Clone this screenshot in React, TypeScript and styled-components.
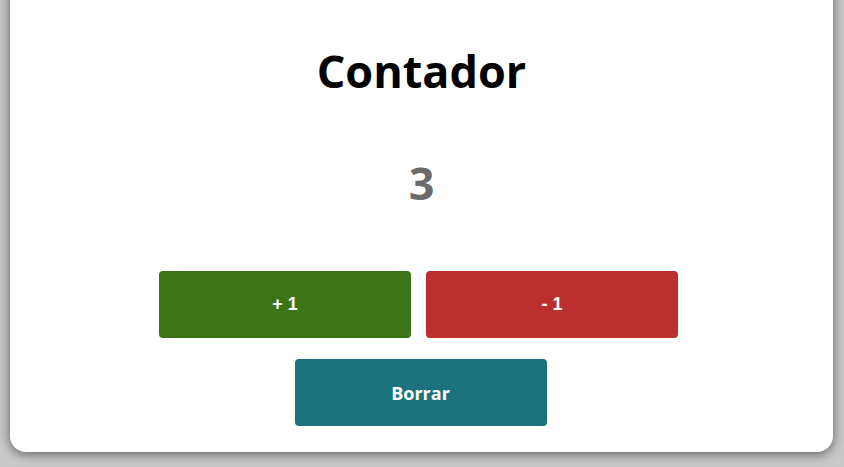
import React, { useState } from "react";
import styled, { createGlobalStyle } from "styled-components";

const Global = createGlobalStyle`
  html, body {
    margin: 0;
    padding: 0;
    background: #c9c9c9;
    overflow: hidden;
  }
  body {
    font-family: "Open Sans", "Noto Sans", sans-serif;
  }
`;

const Page = styled.div`
  width: 844px;
  height: 467px;
  padding: 0 11px 15px 10px;
  box-sizing: border-box;
  display: flex;
  flex-direction: column;
  justify-content: flex-end;
  overflow: hidden;
`;

const Card = styled.div`
  flex-shrink: 0;
  height: 477px;
  background: #ffffff;
  border-radius: 16px;
  box-shadow: 0 2px 12px rgba(0, 0, 0, 0.55);
  display: flex;
  flex-direction: column;
  align-items: center;
  box-sizing: border-box;
  padding-top: 64px;
`;

const Title = styled.h1`
  margin: 0;
  font-size: 45px;
  font-weight: 700;
  line-height: 64px;
  color: #000;
  letter-spacing: 0;
`;

const Count = styled.div`
  margin-top: 48px;
  font-size: 45px;
  font-weight: 700;
  line-height: 64px;
  color: #6b6b6b;
`;

const ButtonRow = styled.div`
  margin-top: 56px;
  display: flex;
  gap: 15px;
  transform: translateX(-3px);
`;

const Button = styled.button<{ $bg: string; $arial?: boolean }>`
  width: 252px;
  height: 67px;
  border: none;
  border-radius: 4px;
  background: ${(p) => p.$bg};
  color: #fff;
  font-family: ${(p) =>
    p.$arial ? '"Liberation Sans", Arial, sans-serif' : '"Open Sans", "Noto Sans", sans-serif'};
  font-size: 18px;
  font-weight: 700;
  cursor: pointer;
  padding: 0;
`;

const Single = styled.div`
  margin-top: 21px;
  transform: translateX(-1px);
`;

export default function App() {
  const [count, setCount] = useState(3);
  return (
    <>
      <Global />
      <Page>
        <Card>
          <Title>Contador</Title>
          <Count>{count}</Count>
          <ButtonRow>
            <Button $bg="#3c7317" $arial onClick={() => setCount(count + 1)}>
              + 1
            </Button>
            <Button $bg="#bb2f2f" $arial onClick={() => setCount(count - 1)}>
              - 1
            </Button>
          </ButtonRow>
          <Single>
            <Button $bg="#1c727c" onClick={() => setCount(0)}>
              Borrar
            </Button>
          </Single>
        </Card>
      </Page>
    </>
  );
}
